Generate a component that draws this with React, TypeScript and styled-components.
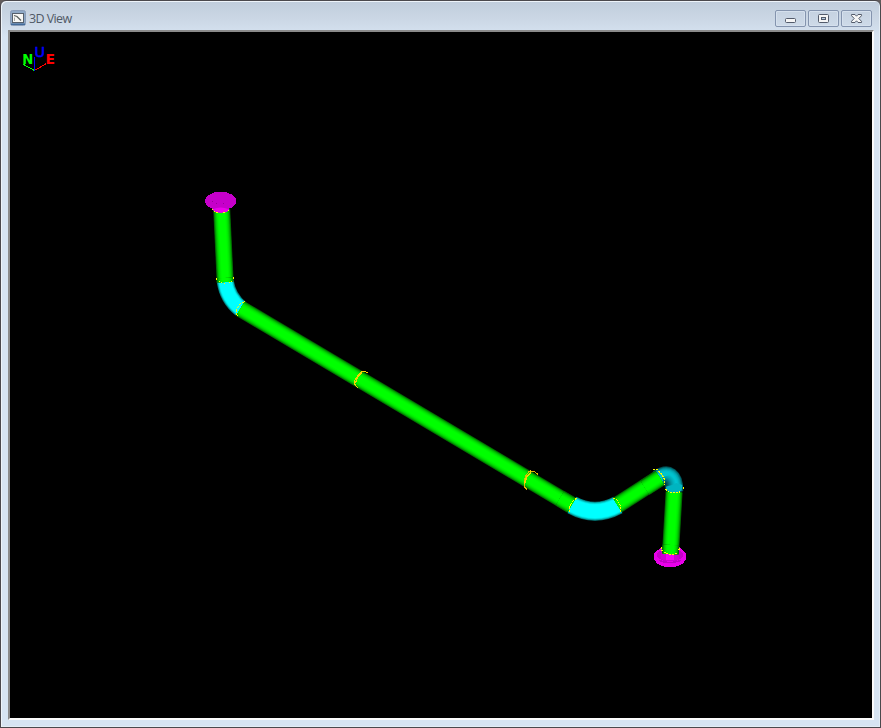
import React from 'react';
import styled, { createGlobalStyle } from 'styled-components';

const GlobalStyle = createGlobalStyle`
  html, body, #root { margin: 0; height: 100%; overflow: hidden; }
  * { box-sizing: border-box; }
`;

const Backdrop = styled.div`
  width: 881px;
  height: 728px;
  background: #625c5c;
`;

const WindowFrame = styled.div`
  width: 881px;
  height: 728px;
  display: flex;
  flex-direction: column;
  padding: 0 6px 7px 7px;
  border: 1px solid #4b494d;
  border-radius: 6px 6px 0 0;
  background: linear-gradient(#c0cddc 0, #cbd7e5 18px, #d7e4f2 36px);
  box-shadow: inset 1px 1px 0 #eef4fa, inset -1px -1px 0 #e4edf5;
`;

const TitleBar = styled.header`
  height: 29px;
  flex: none;
  display: flex;
  align-items: center;
  padding: 5px 2px 0 2px;
`;

const Title = styled.h1`
  flex: 1;
  margin: 0 0 0 3px;
  padding-top: 1px;
  color: #505966;
  font: 400 12.5px/16px "Open Sans", "Noto Sans", sans-serif;
  letter-spacing: -0.6px;
`;

const Controls = styled.div`
  display: flex;
  gap: 2px;
`;

const ControlButton = styled.button`
  width: 31px;
  height: 17px;
  padding: 0;
  display: flex;
  border: 1px solid #8494ae;
  border-radius: 2px;
  background: linear-gradient(#c5d2e1, #cedae8);
  box-shadow: inset 0 0 0 1px #d5e0ed;
`;

const Viewport = styled.main`
  flex: 1;
  min-height: 0;
  border-style: solid;
  border-width: 2px;
  border-color: #8b8b8b #fbfbfb #fbfbfb #8b8b8b;
  background: #000;
`;

const Scene = styled.svg`
  display: block;
  width: 862px;
  height: 686px;
`;

const AxisLabel = styled.text<{ $weight?: number }>`
  font: ${({ $weight = 700 }) => $weight} 14px "DejaVu Sans", sans-serif;
`;

type Material = 'green' | 'cyan' | 'teal';

const materials: Record<Material, [number, number, number]> = {
  green: [0, 255, 0],
  cyan: [0, 255, 255],
  teal: [0, 196, 208],
};

// Tubes are shaded from dark silhouette to lit centre with nested strokes.
const layers = [
  { scale: 1, light: 0.36 },
  { scale: 0.94, light: 0.5 },
  { scale: 0.87, light: 0.64 },
  { scale: 0.79, light: 0.76 },
  { scale: 0.7, light: 0.85 },
  { scale: 0.6, light: 0.92 },
  { scale: 0.5, light: 0.97 },
  { scale: 0.38, light: 1 },
];

function Tube({ d, material, width = 17 }: { d: string; material: Material; width?: number }) {
  const color = materials[material];
  const gain = material === 'cyan' ? 1.25 : 1;
  return (
    <g fill="none">
      {layers.map(({ scale, light }) => (
        <path
          key={scale}
          d={d}
          stroke={`rgb(${color.map((c) => Math.round(c * Math.min(1, light * gain))).join(',')})`}
          strokeWidth={width * scale}
        />
      ))}
    </g>
  );
}

function Weld({ d, dash, color = '#ffff00', width = 1 }: { d: string; dash?: string; color?: string; width?: number }) {
  return <path d={d} fill="none" stroke={color} strokeWidth={width} strokeDasharray={dash} shapeRendering="crispEdges" />;
}

function AppIcon() {
  return (
    <svg width="16" height="16" viewBox="0 0 16 16">
      <rect x=".5" y=".5" width="15" height="15" rx="2" fill="#8fa9c6" stroke="#8a9db8" />
      <path d="M1 13.5h14V15H1z" fill="#426b9a" />
      <rect x="2.5" y="3.5" width="11" height="9" fill="#f8f8f5" stroke="#56606c" />
      <path d="M4 5.5l3 1 4 4" fill="none" stroke="#59605f" strokeWidth="1.3" />
      <path d="M4.5 7.5v3.500" fill="none" stroke="#a4a9a8" />
    </svg>
  );
}

function ControlGlyph({ kind }: { kind: 'minimize' | 'restore' | 'close' }) {
  return (
    <svg width="29" height="15" viewBox="0 0 29 15">
      {kind === 'minimize' && <rect x="9.5" y="7.5" width="10" height="4" rx="1" fill="#f6f6f6" stroke="#535b6b" />}
      {kind === 'restore' && (
        <>
          <rect x="9.5" y="3.5" width="10" height="8" rx="1" fill="#f5f5f5" stroke="#535b6b" />
          <rect x="12.5" y="6.5" width="4" height="2" fill="#b7cbe0" stroke="#535b6b" />
        </>
      )}
      {kind === 'close' && (
        <path
          d="M9.5 3.5h3.5l1.5 1.7L16 3.5h3.5v1.2L16.8 7.5l2.7 2.8v1.2H16l-1.5-1.7-1.5 1.7H9.5v-1.2l2.7-2.8-2.7-2.8z"
          fill="#f6f6f6"
          stroke="#535b6b"
        />
      )}
    </svg>
  );
}

function AxisTriad() {
  return (
    <g>
      <AxisLabel x="22.300" y="64" fill="#00ff00" textLength="11" lengthAdjust="spacingAndGlyphs">N</AxisLabel>
      <AxisLabel x="34.5" y="57" fill="#0000ff" $weight={400} stroke="#0000ff" strokeWidth=".5" textLength="10.5" lengthAdjust="spacingAndGlyphs">U</AxisLabel>
      <AxisLabel x="45.5" y="64" fill="#ff0000" textLength="9.5" lengthAdjust="spacingAndGlyphs">E</AxisLabel>
      <g fill="none" shapeRendering="crispEdges">
        <path d="M23.5 64.5L34.5 70.5" stroke="#00ff00" />
        <path d="M34.5 70.5L46.5 63.5" stroke="#ff0000" />
        <path d="M34.5 57V71" stroke="#0000ff" />
      </g>
    </g>
  );
}

function PipeModel() {
  return (
    <g>
      <defs>
        <radialGradient id="elbowCrease" gradientUnits="userSpaceOnUse" cx="665" cy="484" r="11">
          <stop offset="0" stopColor="#003840" stopOpacity=".95" />
          <stop offset=".45" stopColor="#005b65" stopOpacity=".6" />
          <stop offset="1" stopColor="#008c98" stopOpacity="0" />
        </radialGradient>
      </defs>

      <Tube material="green" d="M221.7 209L225.2 282" />
      <path d="M213 207h16v3q-2 3-8 3t-8-3z" fill="#e800e8" />
      <ellipse cx="220.700" cy="201" rx="15.5" ry="9.3" fill="#c600ca" shapeRendering="crispEdges" />
      <path d="M213 209q8-3 15 0l-2 3h-10z" fill="#ed00ed" />
      <path d="M212 201.5h1M216 203.5h1M223 203.5h1" stroke="#980098" />
      <Weld d="M212 209.5h1M214 211.5h1M216 212.5h2M223 212.5h2M228 210.5h1" />

      <Tube material="cyan" d="M225.2 281Q227.5 298 241 309" />
      <Tube material="green" d="M225 278L225.2 282" />
      <Tube material="green" d="M240.5 308.7L573 506" />
      <Weld d="M216.500 278v2M219 281.500h1M221 282.500h1M224 283.500h1M229 282.500h1M231 281.500h1M233.500 277v2" />
      <Weld d="M245 301.5l-4 1.5-4 5-.5 6 2 3" dash="3 1" />
      <Weld d="M368.5 373.5l-3-2-4 .5-3.5 3-3 5-.5 4 1.5 2 2 2" color="#f2d600" />
      <Weld d="M361.5 371v2l-4 4-2 6" color="#f2d600" width={1.5} />
      <Weld d="M538 474.5l-3-2.5-2-1-4 .5-3 4-2 6v5l3 3" color="#ddb900" />
      <Weld d="M530.5 470v3l-4 4-2 7" color="#f2d600" width={1.5} />

      <Tube material="cyan" d="M572 505Q595 517.5 618 505" width={18.8} />
      <Tube material="green" d="M560 498.300L571.500 505.100" />
      <Tube material="green" d="M617.5 505L661 477" />
      <Weld d="M577.5 497.5l-4 3-4 6-.5 6" dash="3 1" />
      <Weld d="M613.5 498.5l3 1 3 4 1.5 4-.5 6" dash="2 1" />

      <Tube material="teal" d="M658 478.5C668 471.500 675 476 674.500 491" width={17.5} />
      <path d="M662 477l8-2 8 7-1 9h-11z" fill="url(#elbowCrease)" />
      <Tube material="green" d="M674.1 492L670.5 553" />
      <Tube material="green" d="M645 487.700L660 478" />
      <path d="M666 488.500q3 4.500 8.500 4.500 5.500 0 7.500-4l.3-4-6-2q-5 3-10 3.500z" fill="#00b4c0" />
      <Weld d="M653 469.5h4l5 5 3 6-.5 5" dash="2 1" />
      <Weld d="M665.5 489l1 1 3 2.500h9l2-1M683.500 487v3" dash="2 1" />

      <g shapeRendering="crispEdges">
        <path d="M662 547h17l7 6v6q-3 8-16 8t-16-8v-6z" fill="#e900e9" />
        <ellipse cx="670" cy="555" rx="13" ry="6.5" fill="#c500c9" />
        <path d="M661 548h18v11q-9 4-18 0z" fill="#cf00d2" />
        <path d="M666 553h8v7h-8z" fill="#f600f6" />
        <path d="M659 560.500q11 4 22 0" fill="none" stroke="#c000c4" strokeWidth="1.5" />
      </g>
      <Tube material="green" d="M670.8 545L670.4 554" />
      <Weld d="M661.5 547v3l4 3 4 1.5h5l4-3 1-4" dash="2 1" />
    </g>
  );
}

export default function App() {
  return (
    <Backdrop>
      <GlobalStyle />
      <WindowFrame>
        <TitleBar>
          <AppIcon />
          <Title>3D View</Title>
          <Controls>
            <ControlButton aria-label="Minimize"><ControlGlyph kind="minimize" /></ControlButton>
            <ControlButton aria-label="Restore"><ControlGlyph kind="restore" /></ControlButton>
            <ControlButton aria-label="Close"><ControlGlyph kind="close" /></ControlButton>
          </Controls>
        </TitleBar>
        <Viewport>
          <Scene viewBox="10 32 862 686">
            <AxisTriad />
            <PipeModel />
          </Scene>
        </Viewport>
      </WindowFrame>
    </Backdrop>
  );
}
